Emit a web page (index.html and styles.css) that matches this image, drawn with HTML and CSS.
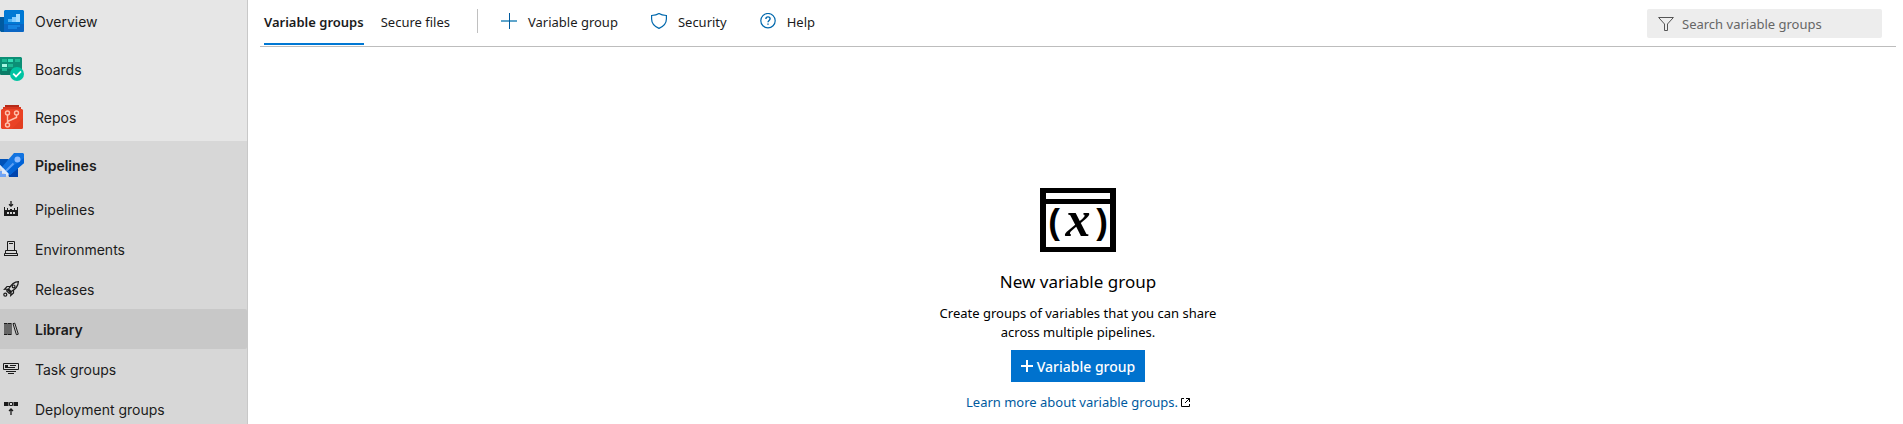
FILE: index.html
```html
<!DOCTYPE html>
<html lang="en">
<head>
<meta charset="utf-8">
<title>Library - Pipelines</title>
<link rel="stylesheet" href="styles.css">
</head>
<body>
<div class="app">
  <nav class="sidebar" aria-label="Project">
    <a class="nav-item" href="#overview">
      <svg class="hub-icon" viewBox="0 0 24 24" aria-hidden="true">
        <path fill="#005ba1" d="M0 8h5v15H1l-1-1z"/>
        <path fill="#0078d4" d="M4 2l1-1h18l1 1v20l-1 1H4z"/>
        <path fill="#0a66c4" d="M4 15h20v7l-1 1H4z"/>
        <path fill="#50b4f5" d="M8 10h4v3H8z"/><path fill="#83cbff" d="M12 8h4v5h-4z"/><path fill="#a5dbff" d="M16 5h4v8h-4z"/>
        <path fill="#1583e0" d="M8 16h12v2H8zM8 18h9v2H8z"/>
      </svg>
      <span>Overview</span>
    </a>
    <a class="nav-item" href="#boards">
      <svg class="hub-icon" viewBox="0 0 24 24" aria-hidden="true">
        <path fill="#0c8f76" d="M0 0h21l1 1v17H1l-1-1z"/>
        <path fill="#0b7c67" d="M0 12h22v6H1l-1-1z"/>
        <path fill="#1db893" d="M2 2h5v3H2zM15 2h5v3h-5zM8 7h5v3H8zM2 11h5v3H2z"/>
        <path fill="#35deb7" d="M8 2h5v3H8z"/><path fill="#a6f5e1" d="M2 7h5v3H2z"/>
        <circle cx="17" cy="17" r="7" fill="#00c4a2"/>
        <path fill="none" stroke="#fff" stroke-width="1.8" d="M13.200 16.700l2.800 2.800 5-5.200"/>
      </svg>
      <span>Boards</span>
    </a>
    <a class="nav-item" href="#repos">
      <svg class="hub-icon" viewBox="0 0 24 24" aria-hidden="true">
        <path fill="#b52a18" d="M5 0h14v2h2v3H3V2h2z"/>
        <path fill="#d8361f" d="M3 2h18v3H3z"/>
        <path fill="#ea4224" d="M1 5l1-1h20l1 1v18l-1 1H2l-1-1z"/>
        <path fill="#da3a1e" d="M12 24L23 13v10l-1 1z" opacity=".5"/>
        <g fill="none" stroke="#ffc0ab" stroke-width="1.400"><circle cx="7.500" cy="8" r="2"/><circle cx="16.500" cy="8" r="2"/><circle cx="7.500" cy="20" r="2"/><path d="M7.500 10v8M16.500 10v2.500l-9 4"/></g>
      </svg>
      <span>Repos</span>
    </a>
    <div class="nav-section">
      <a class="nav-item nav-item-active" href="#pipelines">
        <svg class="hub-icon" viewBox="0 0 24 24" aria-hidden="true">
          <path fill="#0052b8" d="M0 6h9l-6 9-3-3z"/>
          <path fill="#0044ad" d="M18 14v10h-9l-1-4z"/>
          <path fill="#1273e0" d="M14 0h9l1 1v9L10 22 2 14z"/>
          <path fill="#0062d6" d="M24 5v5L10 22l-4-4z"/>
          <circle cx="17.500" cy="6.500" r="3" fill="#8dbcff"/>
          <path stroke="#5c9ff5" stroke-width="1.800" d="M13.500 10.500L6 18"/>
          <path fill="#deebff" d="M0 12l9 9-2 2-3-3H2v-3l-2-2z"/>
          <path fill="#71a4f4" d="M0 18h2v3h4v3H0z"/>
        </svg>
        <span>Pipelines</span>
      </a>
      <a class="nav-item nav-sub" href="#builds">
        <svg class="sub-icon" viewBox="0 0 16 16" aria-hidden="true">
          <path fill="none" stroke="currentColor" stroke-width="1.300" d="M8 0v5M6 3.200l2 2 2-2"/>
          <path fill="currentColor" d="M1 6h1v3h2V7h1v2h2V8h2v1h2V7h1v2h2V6h1v9H1z"/>
          <path fill="#d6d6d6" d="M4 11h2v2H4zM7 11h2v2H7zM10 11h2v2h-2z"/>
        </svg>
        <span>Pipelines</span>
      </a>
      <a class="nav-item nav-sub" href="#environments">
        <svg class="sub-icon" viewBox="0 0 16 16" aria-hidden="true">
          <path fill="none" stroke="currentColor" d="M4.500 10V.5h7V10M6 2.500h4M4.500 9.500h-2V12M11.500 9.500h2V12M1.500 14v-1.500h13V14M1 14.500h14M5 9.500h6"/>
        </svg>
        <span>Environments</span>
      </a>
      <a class="nav-item nav-sub" href="#releases">
        <svg class="sub-icon" viewBox="0 0 16 16" aria-hidden="true">
          <g fill="none" stroke="currentColor" stroke-width="1.200"><path d="M15.400.6c-4.400.2-7 2.400-9.800 7.400l2.600 2.600c5-2.800 7-5.600 7.200-10zM7 5.500H4L1.500 8.300 5.600 8M10.500 9v3l-2.800 2.500.5-4M4.500 8.500l3 3-1.200 1-2.600-2.700z"/><circle cx="10.600" cy="5.400" r="1.400"/><circle cx="2.300" cy="13.700" r="1.500"/></g>
        </svg>
        <span>Releases</span>
      </a>
      <a class="nav-item nav-sub nav-item-selected" href="#library" aria-current="page">
        <svg class="sub-icon" viewBox="0 0 16 16" aria-hidden="true">
          <path fill="#666" d="M1 2h8v12H1z"/>
          <path stroke="currentColor" stroke-dasharray="3 1" d="M1 2.500h8M1 13.500h8"/>
          <path fill="none" stroke="currentColor" d="M10 2.600l1.800-.4 3.500 11-1.900.5z"/>
        </svg>
        <span>Library</span>
      </a>
      <a class="nav-item nav-sub" href="#taskgroups">
        <svg class="sub-icon" viewBox="0 0 16 16" aria-hidden="true">
          <path fill="none" stroke="currentColor" d="M3 8.500H.5v-6h15v6H13M7 4.500h6M2 6.500h10M3 8.500h10M3 10.500h10M5 12.500h6"/>
          <path fill="currentColor" d="M2 4h3v3H2z"/>
        </svg>
        <span>Task groups</span>
      </a>
      <a class="nav-item nav-sub" href="#deploymentgroups">
        <svg class="sub-icon" viewBox="0 0 16 16" aria-hidden="true">
          <path fill="currentColor" d="M1 1h4v4H1zM11 1h4v4h-4z"/><path fill="#777" d="M5 1h1v4H5zM10 1h1v4h-1z"/>
          <path fill="none" stroke="currentColor" d="M6.500 1.500h3v3h-3z"/>
          <path fill="none" stroke="currentColor" stroke-width="1.300" d="M8 14V8M6 10l2-2 2 2"/>
        </svg>
        <span>Deployment groups</span>
      </a>
    </div>
  </nav>

  <main class="content">
    <header class="toolbar">
      <div class="tabs">
        <a class="tab tab-active" href="#variable-groups" aria-current="true">Variable groups</a>
        <a class="tab" href="#secure-files">Secure files</a>
      </div>
      <div class="commands">
        <button class="command" type="button">
          <svg class="command-icon" viewBox="0 0 16 16" aria-hidden="true"><path stroke="#5fa5cb" stroke-width="2" d="M0 8h16"/><path stroke="#005a9e" d="M8.500 0v16"/></svg>
          Variable group
        </button>
        <button class="command" type="button">
          <svg class="command-icon" viewBox="0 0 16 16" aria-hidden="true"><path fill="none" stroke="#0068ad" stroke-width="1.200" d="M8 .6C6 2 3.500 2.500.6 2.500V6c0 4.500 3 7.500 7.400 9.400 4.400-1.900 7.400-4.900 7.400-9.400V2.500C12.500 2.500 10 2 8 .6z"/></svg>
          Security
        </button>
        <button class="command" type="button">
          <svg class="command-icon" viewBox="0 0 16 16" aria-hidden="true"><g fill="none" stroke="#0068ad" stroke-width="1.200"><circle cx="8" cy="7.700" r="7.200"/><path stroke-width="1.400" d="M5.900 6c0-1.300.9-2.100 2.100-2.100s2.100.8 2.100 1.900c0 1.600-2.100 1.800-2.100 3.500M8 10.400v1.400"/></g></svg>
          Help
        </button>
      </div>
      <label class="search">
        <svg class="search-icon" viewBox="0 0 16 16" aria-hidden="true"><path fill="none" stroke="#555" d="M.6 1.500h14.800L9.500 8v6.500h-3V8z"/></svg>
        <input class="search-input" type="text" placeholder="Search variable groups" aria-label="Search variable groups">
      </label>
    </header>

    <section class="empty-state">
      <svg class="empty-icon" viewBox="0 0 76 64" aria-hidden="true">
        <path fill="#000" fill-rule="evenodd" d="M0 0h76v64H0zM6 5v6h64V5zM6 16v43h64V16z"/>
        <text class="glyph-paren" x="14" y="46">(</text>
        <text class="glyph-x" x="38" y="48">x</text>
        <text class="glyph-paren" x="62" y="46">)</text>
      </svg>
      <h1 class="empty-title">New variable group</h1>
      <p class="empty-text">Create groups of variables that you can share<br>across multiple pipelines.</p>
      <button class="primary" type="button">
        <svg class="primary-icon" viewBox="0 0 12 12" aria-hidden="true"><path stroke="#fff" stroke-width="2" d="M0 6h12M6 0v12"/></svg>
        Variable group
      </button>
      <a class="learn-link" href="#learn">Learn more about variable groups.<svg class="external-icon" viewBox="0 0 9 9" aria-hidden="true"><path fill="none" stroke="#000" d="M3 .5H.5v8h8V6M5 .5h3.500V4M8.500.5L4 5"/></svg></a>
    </section>
  </main>
</div>
</body>
</html>
```
FILE: styles.css
```css
* {
  box-sizing: border-box;
}

body {
  margin: 0;
  background: #fff;
  color: #1b1b1b;
  font-family: "Noto Sans", "Open Sans", sans-serif;
  font-size: 13px;
}

a {
  color: inherit;
  text-decoration: none;
}

button {
  border: 0;
  padding: 0;
  background: none;
  color: inherit;
  font: inherit;
  cursor: pointer;
}

svg {
  display: block;
  flex: none;
}

.app {
  display: flex;
  height: 100vh;
  overflow: hidden;
}

/* Sidebar */
.sidebar {
  flex: none;
  width: 248px;
  margin-top: -3px;
  border-right: 1px solid #c8c8c8;
  background: #e6e6e6;
  font-family: Inter, "Liberation Sans", sans-serif;
  font-size: 14px;
}

.nav-section {
  background: #d7d7d7;
}

.nav-item {
  display: flex;
  align-items: center;
  gap: 11px;
  height: 48px;
}

.hub-icon {
  width: 24px;
  height: 24px;
}

.nav-sub {
  gap: 16px;
  height: 40px;
  padding-left: 3px;
}

.sub-icon {
  width: 16px;
  height: 16px;
}

.nav-item-active,
.nav-item-selected {
  font-weight: 600;
}

.nav-item-selected {
  border-radius: 0 2px 2px 0;
  background: #c8c8c8;
}

/* Toolbar */
.content {
  flex: 1;
  min-width: 0;
  padding: 0 7px 0 12px;
}

.toolbar {
  display: flex;
  align-items: flex-start;
  height: 47px;
  padding: 0 14px 0 4px;
  border-bottom: 1px solid #bdbdbd;
}

.tabs {
  display: flex;
  gap: 17px;
}

.tab {
  height: 45px;
  border-bottom: 2px solid transparent;
  line-height: 45px;
}

.tab-active {
  border-bottom-color: #0078d4;
  font-weight: 600;
}

.commands {
  display: flex;
  gap: 33px;
  height: 24px;
  margin: 9px 0 0 27px;
  padding-left: 23px;
  border-left: 1px solid #c0c0c0;
}

.command {
  display: flex;
  align-items: flex-start;
  gap: 11px;
  line-height: 26px;
}

.command-icon {
  width: 16px;
  height: 16px;
  margin-top: 4px;
}

.search {
  display: flex;
  align-items: center;
  gap: 8px;
  width: 235px;
  height: 29px;
  margin: 9px 0 0 auto;
  padding: 0 11px;
  border-radius: 2px;
  background: #ededed;
}

.search-icon {
  width: 16px;
  height: 16px;
}

.search-input {
  flex: 1;
  min-width: 0;
  border: 0;
  padding: 0;
  outline: 0;
  background: transparent;
  color: #1b1b1b;
  font: inherit;
}

.search-input::placeholder {
  color: #666;
  opacity: 1;
}

/* Empty state */
.empty-state {
  display: flex;
  flex-direction: column;
  align-items: center;
  padding-top: 141px;
  color: #000;
  text-align: center;
}

.empty-icon {
  width: 76px;
  height: 64px;
}

.glyph-paren,
.glyph-x {
  text-anchor: middle;
}

.glyph-paren {
  font: bold 35px "Liberation Sans", sans-serif;
}

.glyph-x {
  font: italic bold 50px "Liberation Serif", serif;
}

.empty-title {
  margin: 18px 0 0;
  font-size: 17px;
  font-weight: 400;
  line-height: 24px;
}

.empty-text {
  margin: 10px 0 0;
  line-height: 19px;
}

.primary {
  display: flex;
  align-items: center;
  gap: 4px;
  height: 32px;
  margin-top: 8px;
  padding: 0 10px;
  background: #0072ce;
  color: #fff;
  font-size: 14px;
  font-weight: 500;
}

.primary-icon {
  width: 12px;
  height: 12px;
}

.learn-link {
  display: flex;
  align-items: center;
  gap: 3px;
  margin-top: 10px;
  color: #005a9e;
  line-height: 20px;
}

.external-icon {
  width: 9px;
  height: 9px;
}
```
